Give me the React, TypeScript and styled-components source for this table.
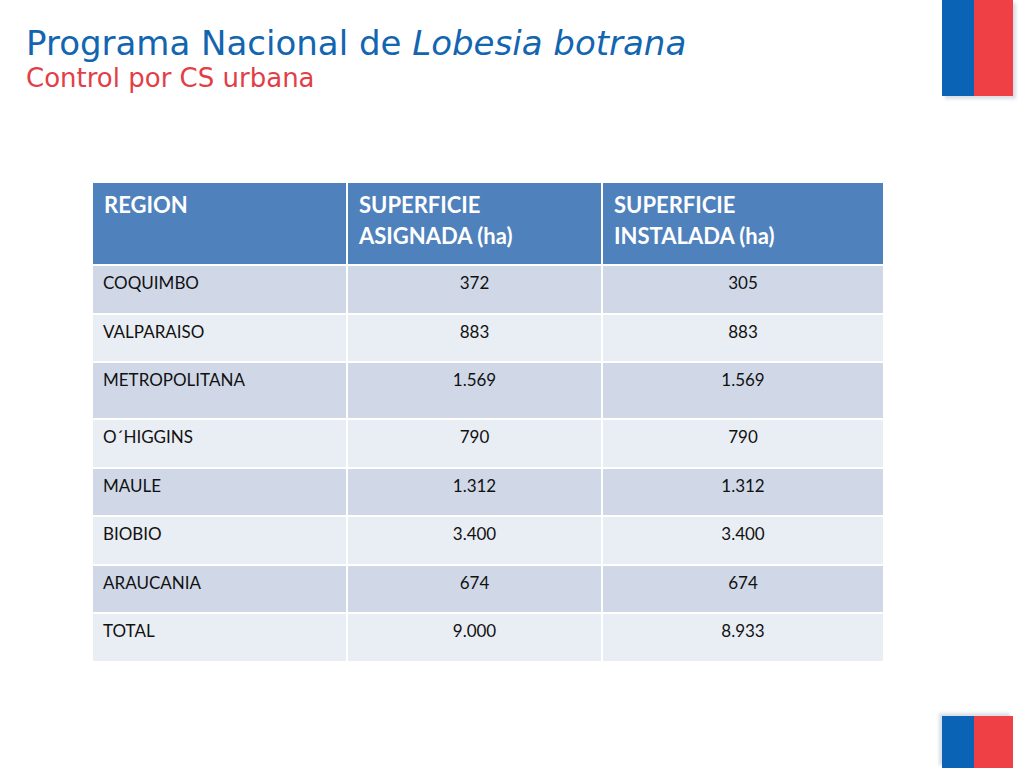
import React from "react";
import styled, { createGlobalStyle } from "styled-components";

const Global = createGlobalStyle`
  html, body { margin: 0; padding: 0; background: #ffffff; }
  #root { width: 1024px; height: 768px; }
`;

const Slide = styled.div`
  width: 1024px;
  height: 768px;
  display: flex;
  flex-direction: column;
  background: #ffffff;
  overflow: hidden;
`;

const Header = styled.header`
  display: flex;
  justify-content: space-between;
  align-items: flex-start;
  padding: 0 11px 0 26px;
  height: 183px;
`;

const Titles = styled.div`
  padding-top: 23px;
  font-family: "DejaVu Sans", Verdana, sans-serif;
`;

const Title = styled.h1`
  margin: 0;
  font-weight: normal;
  font-size: 34px;
  line-height: 40px;
  color: #1265b0;
  white-space: nowrap;
`;

const Subtitle = styled.h2`
  margin: 0;
  font-weight: normal;
  font-size: 26px;
  line-height: 30px;
  color: #e23e48;
`;

const Flag = styled.div<{ $bottom?: boolean }>`
  display: flex;
  width: 71px;
  height: ${(p) => (p.$bottom ? "52px" : "96px")};
  box-shadow: ${(p) =>
    p.$bottom ? "-3px -3px 3px rgba(150,160,180,0.35)" : "3px 3px 3px rgba(150,160,180,0.35)"};
`;

const Stripe = styled.div<{ $color: string; $w: number }>`
  width: ${(p) => p.$w}px;
  background: ${(p) => p.$color};
`;

const TableWrap = styled.div`
  padding-left: 93px;
`;

const Grid = styled.div`
  display: grid;
  grid-template-columns: 253px 253px 280px;
  column-gap: 2px;
  row-gap: 2px;
  width: 790px;
  font-family: Lato, "Open Sans", sans-serif;
`;

const HeadCell = styled.div`
  height: 81px;
  background: #4f81bd;
  color: #ffffff;
  font-weight: bold;
  font-size: 22px;
  line-height: 31px;
  padding: 6px 11px 0;
  box-sizing: border-box;
`;

const Cell = styled.div<{ $alt: boolean; $tall: boolean; $center?: boolean }>`
  height: ${(p) => (p.$tall ? "55px" : "46.5px")};
  background: ${(p) => (p.$alt ? "#e9edf4" : "#d0d8e8")};
  color: #111111;
  font-size: 17px;
  line-height: 20px;
  padding: 7px 10px 0;
  box-sizing: border-box;
  text-align: ${(p) => (p.$center ? "center" : "left")};
`;

const Footer = styled.footer`
  margin-top: auto;
  display: flex;
  justify-content: flex-end;
  padding-right: 11px;
`;

const rows: [string, string, string][] = [
  ["COQUIMBO", "372", "305"],
  ["VALPARAISO", "883", "883"],
  ["METROPOLITANA", "1.569", "1.569"],
  ["O´HIGGINS", "790", "790"],
  ["MAULE", "1.312", "1.312"],
  ["BIOBIO", "3.400", "3.400"],
  ["ARAUCANIA", "674", "674"],
  ["TOTAL", "9.000", "8.933"],
];

const ChileFlag = ({ bottom }: { bottom?: boolean }) => (
  <Flag $bottom={bottom}>
    <Stripe $color="#0b63b5" $w={32} />
    <Stripe $color="#ef4145" $w={39} />
  </Flag>
);

export default function App() {
  return (
    <Slide>
      <Global />
      <Header>
        <Titles>
          <Title>
            Programa Nacional de <i>Lobesia botrana</i>
          </Title>
          <Subtitle>Control por CS urbana</Subtitle>
        </Titles>
        <ChileFlag />
      </Header>
      <TableWrap>
        <Grid>
          <HeadCell>REGION</HeadCell>
          <HeadCell>
            SUPERFICIE
            <br />
            ASIGNADA (ha)
          </HeadCell>
          <HeadCell>
            SUPERFICIE
            <br />
            INSTALADA (ha)
          </HeadCell>
          {rows.map((r, i) => {
            const alt = i % 2 === 1;
            const tall = r[0] === "METROPOLITANA";
            return (
              <React.Fragment key={r[0]}>
                <Cell $alt={alt} $tall={tall}>{r[0]}</Cell>
                <Cell $alt={alt} $tall={tall} $center>{r[1]}</Cell>
                <Cell $alt={alt} $tall={tall} $center>{r[2]}</Cell>
              </React.Fragment>
            );
          })}
        </Grid>
      </TableWrap>
      <Footer>
        <ChileFlag bottom />
      </Footer>
    </Slide>
  );
}
